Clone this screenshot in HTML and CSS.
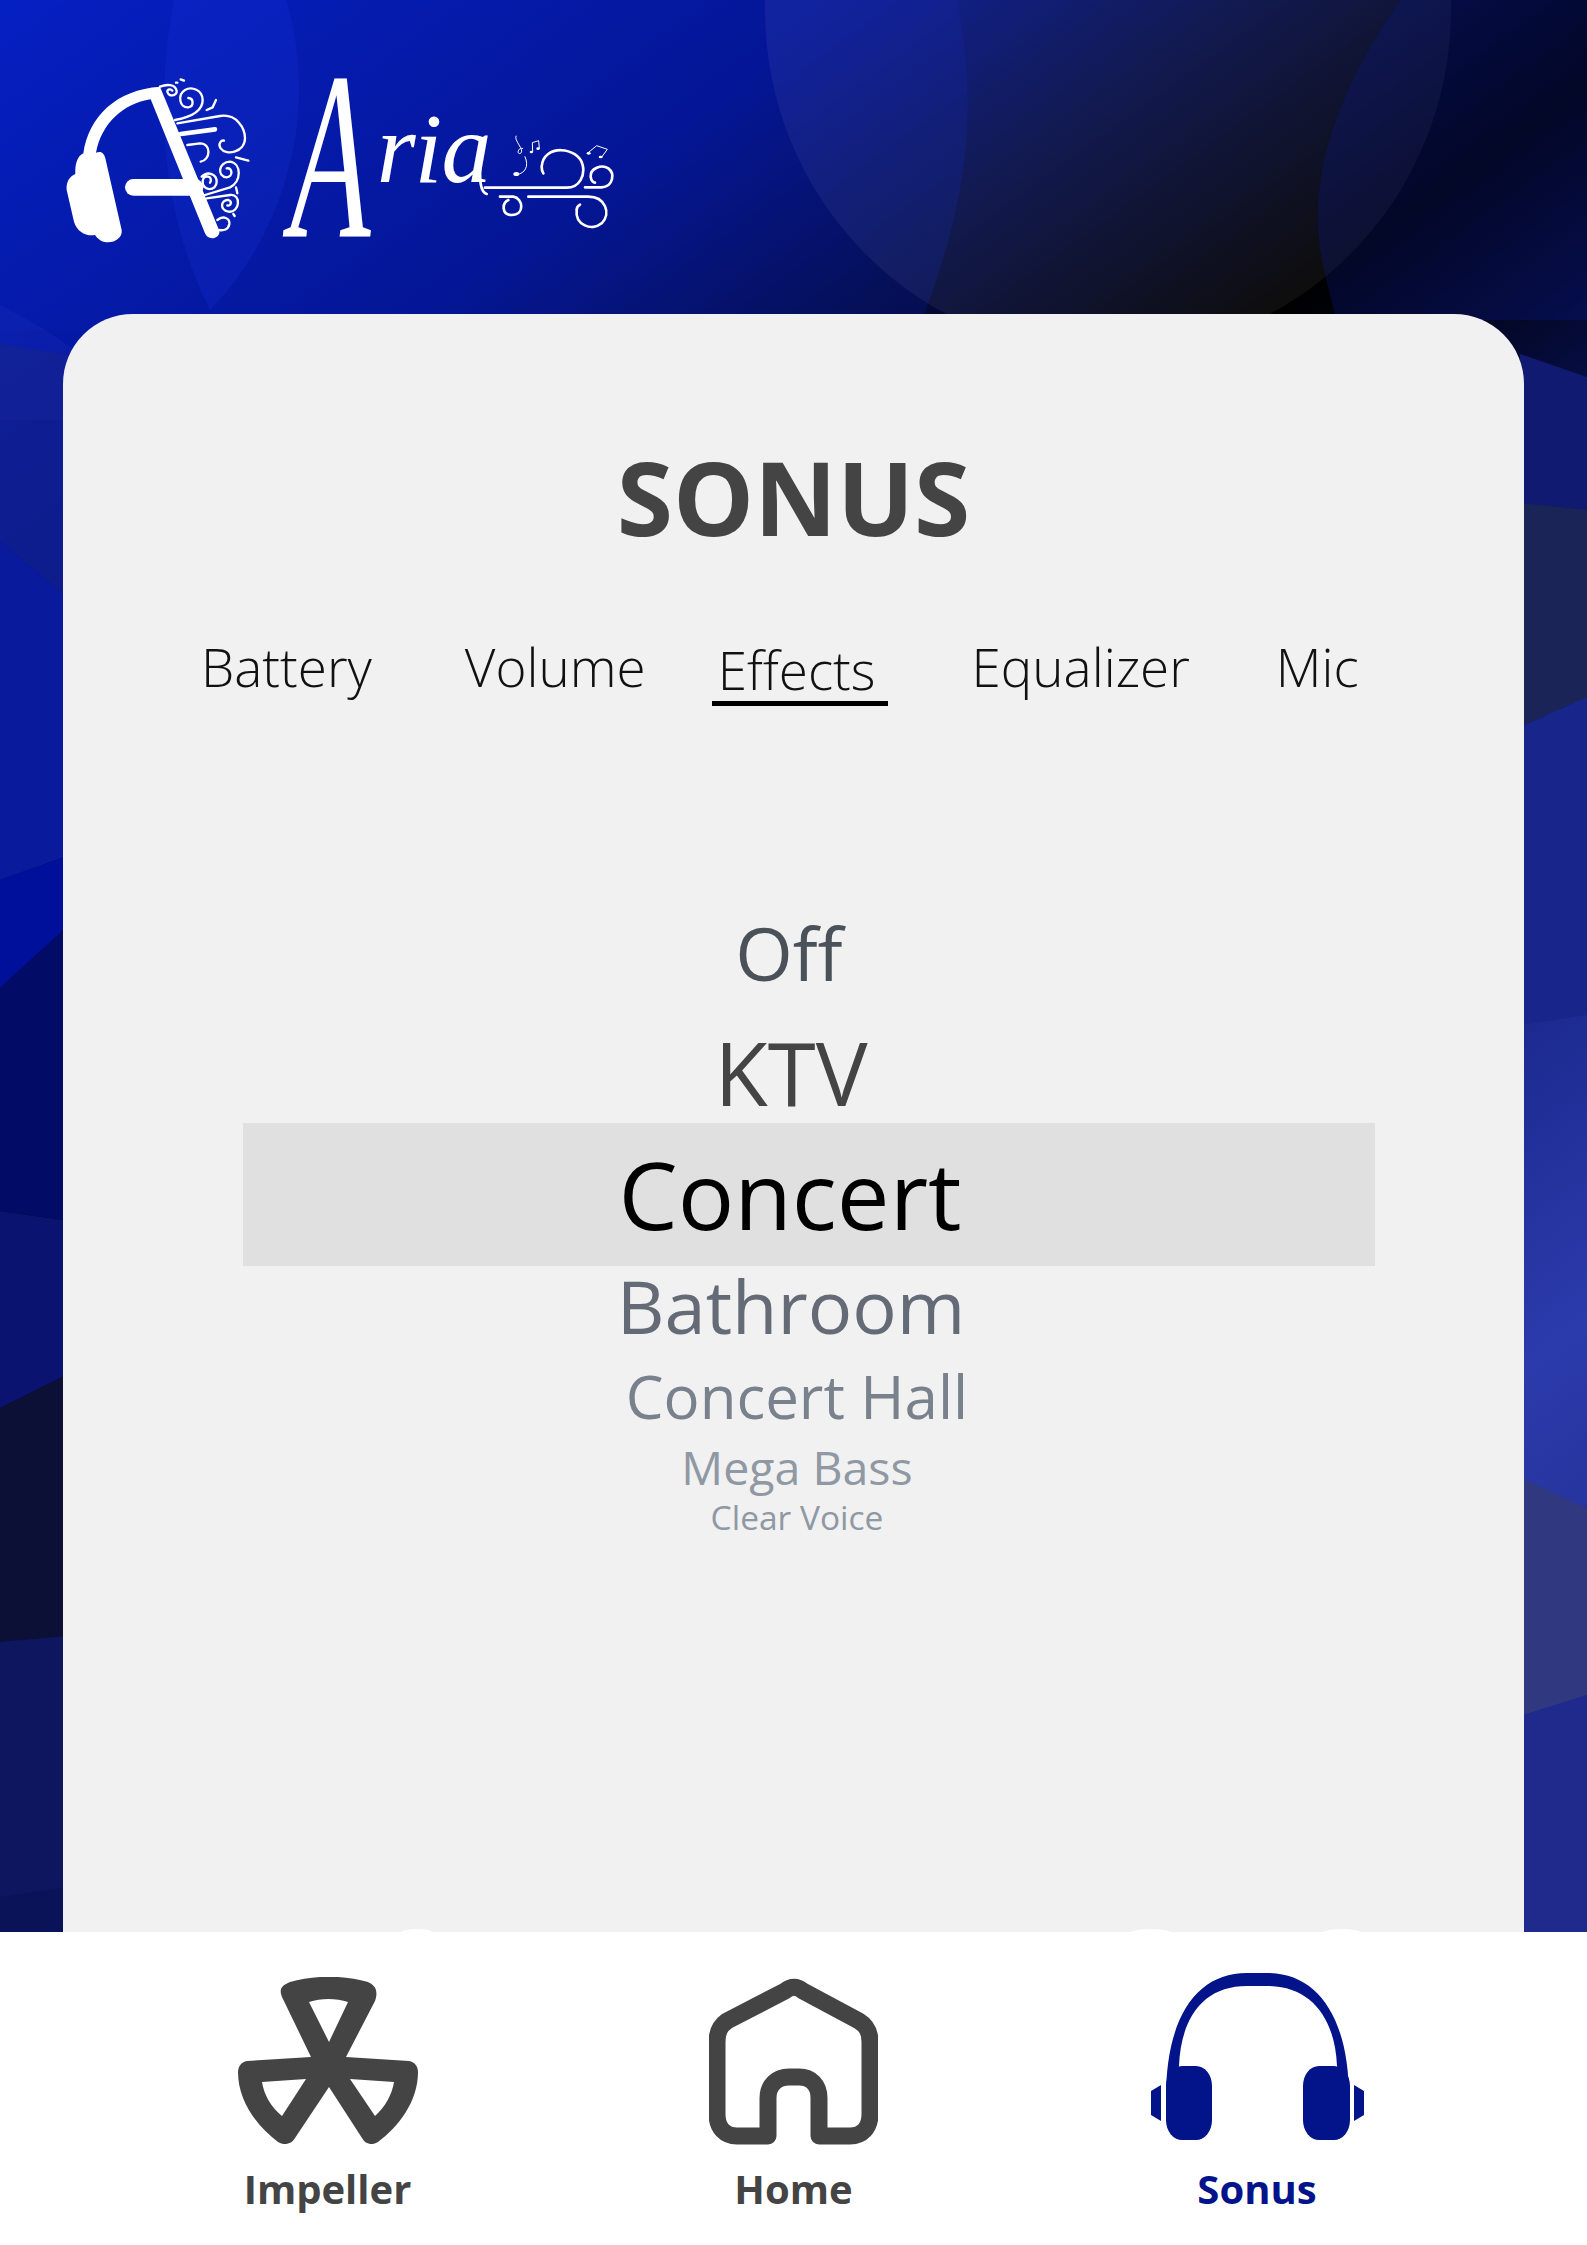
FILE: index.html
```html
<!doctype html>
<html lang="en">
    <head>
        <meta charset="utf-8">
        <title>Aria - Sonus</title>
        <link rel="stylesheet" href="styles.css">
    </head>
    <body>
        <div class="screen">
            <!-- background: gradient and the big see-through bubbles -->
            <svg class="backdrop" width="1587" height="1940" viewBox="0 0 1587 1940" aria-hidden="true">
                <defs>
                    <linearGradient id="sky" gradientUnits="userSpaceOnUse" x1="0" y1="0" x2="1467" y2="2025">
                        <stop offset="0" stop-color="#0520c8"/>
                        <stop offset="0.2" stop-color="#03148f"/>
                        <stop offset="0.29" stop-color="#050d48"/>
                        <stop offset="0.4" stop-color="#000000"/>
                        <stop offset="0.56" stop-color="#0a1670"/>
                        <stop offset="0.8" stop-color="#2b3bab"/>
                        <stop offset="1" stop-color="#1a2480"/>
                    </linearGradient>
                </defs>
                <rect width="1587" height="1940" fill="url(#sky)"/>
                <!-- blue wash, left of the dark middle -->
                <path d="M0 0H957C975 90 975 190 918 330H0Z" fill="#0a20b0" opacity=".22"/>
                <path d="M174 0C155 100 160 210 210 310C270 250 325 130 286 0Z" fill="#1a38e0" opacity=".22"/>
                <path d="M0 305C60 335 110 370 135 420H0Z" fill="#2a3ac0" opacity=".18"/>
                <ellipse cx="1108" cy="10" rx="343" ry="345" fill="#ffffff" opacity=".055"/>
                <path d="M1401 0C1350 70 1310 160 1319 240C1322 270 1330 290 1336 320H1587V0Z" fill="#0a1a90" opacity=".28"/>
                <!-- left strip -->
                <path d="M0 344L70 355V600L0 541Z" fill="#16238a" opacity=".6"/>
                <path d="M0 541L70 600V855L0 880Z" fill="#0a1a9c"/>
                <path d="M0 880L70 855V924L0 988Z" fill="#00109a"/>
                <path d="M0 988L70 924V1221L0 1211Z" fill="#020c66"/>
                <path d="M0 1211L70 1221V1373L0 1408Z" fill="#0a1470"/>
                <path d="M0 1408L70 1373V1636L0 1642Z" fill="#0c1036"/>
                <path d="M0 1642L70 1636V1886L0 1897Z" fill="#0e1660"/>
                <path d="M0 1897L70 1886V1940H0Z" fill="#0a1258"/>
                <!-- right strip -->
                <path d="M1520 354L1587 377V530L1520 503Z" fill="#0f1a70"/>
                <path d="M1520 503L1587 510V697L1520 727Z" fill="#1b2456"/>
                <path d="M1520 727L1587 697V1015L1520 1025Z" fill="#18268c"/>
                <path d="M1520 1477L1587 1509V1695L1520 1716Z" fill="#30397f"/>
                <path d="M1520 1716L1587 1695V1940H1520Z" fill="#1f2a8c"/>
            </svg>

            <header class="top">
                <svg class="mark" width="210" height="200" viewBox="0 0 630 600" aria-hidden="true">
                    <path class="mark-fill" d="M70 280C85 170 170 88 300 80L478 512C482 535 445 545 435 520L272 118C190 130 125 190 108 278C125 272 132 280 136 295L185 510C190 545 130 565 105 525C80 530 50 515 42 485L20 390C18 365 30 348 46 342C45 315 50 290 70 280Z"/>
                    <path class="mark-bar" d="M220 382H405"/>
                    <g class="mark-line">
                        <path d="M300 80C320 72 345 72 350 92C352 108 325 112 322 95C322 88 332 85 337 92"/>
                        <path d="M345 180C400 170 428 150 428 120C428 90 395 78 375 90C352 104 358 145 385 142C402 140 402 115 385 114"/>
                        <path d="M352 190L480 168C530 160 555 205 555 235C555 275 500 290 482 265C472 250 485 240 492 242"/>
                        <path class="mark-thick" d="M362 222L465 208"/>
                        <path d="M382 255L420 250C455 250 452 300 422 305"/>
                        <path d="M425 350C445 330 470 345 470 365C470 395 425 395 428 362C432 340 462 350 450 368"/>
                        <path d="M435 405L510 382C545 365 545 310 510 305C475 305 470 350 500 352C520 350 518 322 500 325"/>
                        <path d="M440 415L510 405C545 400 540 460 505 455C478 450 482 418 505 420C518 424 512 440 502 436"/>
                        <path d="M472 480C490 465 510 475 508 492C505 510 490 512 478 510"/>
                        <path d="M440 150L458 142M458 142L468 120"/>
                        <path d="M348 68L352 68M362 58L372 62M528 292L565 302M528 382L532 400M520 462L524 468"/>
                    </g>
                </svg>
                <div class="wordmark">
                    <svg class="swash" width="350" height="200" viewBox="0 0 1050 600" aria-hidden="true">
                        <path d="M600 320C600 360 600 395 620 402M615 383H860C900 383 915 345 908 315C895 260 790 250 785 320C785 330 787 335 790 340"/>
                        <path d="M915 382H965C1000 380 1005 340 985 325C965 312 930 325 932 350C933 362 940 368 945 368"/>
                        <path d="M660 410H700C730 415 735 465 695 465C665 465 665 430 685 420"/>
                        <path d="M745 410H925C975 410 995 460 965 490C935 515 885 495 890 450C890 445 893 438 900 434"/>
                        <path class="thin" d="M708 228C700 240 735 270 722 280C710 285 712 262 728 265M735 290C748 320 735 340 710 344"/>
                        <path class="thin" d="M758 275L757 248L776 242L778 265M922 280L950 257L982 268L966 290"/>
                        <ellipse cx="709" cy="342" rx="9" ry="6"/>
                        <ellipse cx="754" cy="276" rx="5" ry="4"/>
                        <ellipse cx="774" cy="266" rx="5" ry="4"/>
                        <ellipse cx="926" cy="280" rx="6" ry="4"/>
                        <ellipse cx="962" cy="291" rx="6" ry="4"/>
                    </svg>
                    <span class="word"><span class="word-cap">A</span>ria</span>
                </div>
            </header>

            <main class="card">
                <h1 class="title">SONUS</h1>
                <nav class="tabs">
                    <span class="tab tab-battery">Battery</span>
                    <span class="tab">Volume</span>
                    <span class="tab tab-on">Effects</span>
                    <span class="tab tab-eq">Equalizer</span>
                    <span class="tab">Mic</span>
                </nav>
                <ul class="wheel">
                    <li class="opt opt-off">Off</li>
                    <li class="opt opt-ktv">KTV</li>
                    <li class="opt opt-picked">Concert</li>
                    <li class="opt opt-bath">Bathroom</li>
                    <li class="opt opt-hall">Concert Hall</li>
                    <li class="opt opt-bass">Mega Bass</li>
                    <li class="opt opt-voice">Clear Voice</li>
                </ul>
            </main>

            <footer class="bar">
                <span class="bump bump-1"></span>
                <span class="bump bump-2"></span>
                <span class="bump bump-3"></span>
                <a class="nav nav-impeller">
                    <svg width="180" height="167" viewBox="0 0 180 167" aria-hidden="true">
                        <path class="fan" fill-rule="evenodd" d="M44 20C40 10 46 8 52 5C75 -2 107 -2 130 5C136 8 141 12 137 24L108 80L171 84C177 85 180 90 180 95C180 125 160 150 140 165C134 169 127 167 124 161L91 110L57 161C54 167 46 169 40 165C20 150 0 125 0 95C0 90 3 85 9 84L73 80ZM71 25L91 65L110 25C98 21 83 21 71 25ZM112 102L137 139C147 130 154 118 156 105ZM68 102L24 105C26 118 33 130 44 139Z"/>
                    </svg>
                    <span class="nav-label">Impeller</span>
                </a>
                <a class="nav nav-home">
                    <svg width="169" height="167" viewBox="0 0 169 167" aria-hidden="true">
                        <path class="house" d="M59 158H28C16 158 8 150 8 136V64C8 54 11 48 18 43L76 13C82 8 88 8 94 13L150 43C158 48 161 54 161 64V136C161 150 153 158 141 158H110V120C110 107 102 99 90 99H80C68 99 59 107 59 120Z"/>
                    </svg>
                    <span class="nav-label">Home</span>
                </a>
                <a class="nav nav-sonus">
                    <svg width="213" height="168" viewBox="0 0 213 168" aria-hidden="true">
                        <path d="M15 125C15 45 45 0 96 0H116C167 0 198 45 198 125L186 93C184 45 160 13 116 13H96C52 13 30 45 28 93Z"/>
                        <rect x="15" y="93" width="46" height="74" rx="16" ry="20"/>
                        <rect x="152" y="93" width="47" height="74" rx="16" ry="20"/>
                        <path d="M0 118L10 112V148L0 142ZM213 118L203 112V148L213 142Z"/>
                    </svg>
                    <span class="nav-label">Sonus</span>
                </a>
            </footer>
        </div>
    </body>
</html>
```

FILE: styles.css
```css
body {
    margin: 0;
    font-family: "Open Sans", sans-serif;
}
ul {
    list-style: none;
    margin: 0;
    padding: 0;
}
.screen {
    position: relative;
    display: flex;
    flex-direction: column;
    width: 1587px;
    height: 2245px;
    overflow: hidden;
}
.backdrop {
    position: absolute;
    top: 0;
    left: 0;
}

/* logo */
.top {
    position: relative;
    display: flex;
    gap: 10px;
    height: 254px;
    padding: 60px 0 0 60px;
}
.mark-fill {
    fill: #fff;
}
.mark-bar {
    fill: none;
    stroke: #fff;
    stroke-width: 50;
    stroke-linecap: round;
}
.mark-line path {
    fill: none;
    stroke: #fff;
    stroke-width: 7;
    stroke-linecap: round;
}
.mark-line .mark-thick {
    stroke-width: 14;
}
.wordmark {
    position: relative;
    width: 350px;
    height: 200px;
}
.swash path {
    fill: none;
    stroke: #fff;
    stroke-width: 8;
    stroke-linecap: round;
}
.swash .thin {
    stroke-width: 3;
}
.swash ellipse {
    fill: #fff;
}
.word {
    position: absolute;
    left: 3px;
    top: 70px;
    font-family: "Liberation Serif", serif;
    font-style: italic;
    font-size: 100px;
    line-height: 0;
    letter-spacing: -1px;
    color: #fff;
}
.word-cap {
    display: inline-block;
    font-size: 155px;
    transform: translateY(26px) scale(.85, 1.55);
}

/* card */
.card {
    position: relative;
    flex: 1;
    margin: 0 63px;
    background: #f1f1f1;
    border-radius: 70px 70px 0 0;
}
.title {
    margin: 0;
    padding-top: 113px;
    font-size: 102px;
    font-weight: 700;
    line-height: 139px;
    text-align: center;
    color: #444;
}
.tabs {
    display: flex;
    gap: 91px;
    margin-top: 63px;
    padding-left: 138px;
    font-weight: 300;
    font-size: 53px;
    line-height: 75px;
    color: #111;
}
.tab-battery {
    margin-right: 2px;
}
.tab-on {
    margin: 3px -7px 0 -25px;
    height: 69px;
    padding: 0 12px 0 6px;
    border-bottom: 5px solid #000;
}
.tab-eq {
    margin-right: -5px;
}
.wheel {
    margin: 178px 0 0 180px;
    width: 1132px;
    text-align: center;
}
.opt {
    padding-right: 32px;
}
.opt-off {
    padding-right: 40px;
    font-size: 74px;
    line-height: 138px;
    color: #4b5159;
}
.opt-ktv {
    padding-right: 36px;
    font-size: 87px;
    line-height: 101px;
    color: #444;
}
.opt-picked {
    padding-right: 38px;
    background: #e0e0e0;
    font-size: 94px;
    line-height: 143px;
    color: #000;
}
.opt-bath {
    padding-right: 36px;
    font-size: 74px;
    line-height: 79px;
    color: #646b76;
}
.opt-hall {
    padding-right: 24px;
    font-size: 60px;
    line-height: 102px;
    color: #78818c;
}
.opt-bass {
    padding-right: 24px;
    font-size: 46.5px;
    line-height: 40px;
    color: #8f98a3;
}
.opt-voice {
    padding-right: 24px;
    font-size: 33.5px;
    line-height: 60px;
    color: #8f98a3;
}

/* bottom nav */
.bar {
    position: relative;
    display: grid;
    grid-template-columns: repeat(3, 465px);
    justify-content: center;
    height: 313px;
    background: #fff;
}
.bump {
    position: absolute;
    top: -3px;
    height: 6px;
    border-radius: 50%;
    background: #fff;
}
.bump-1 {
    left: 402px;
    width: 30px;
}
.bump-2 {
    left: 1132px;
    width: 38px;
}
.bump-3 {
    left: 1324px;
    width: 36px;
}
.nav {
    display: flex;
    flex-direction: column;
    align-items: center;
    font-size: 40px;
    font-weight: 700;
    color: #444;
}
.nav svg {
    display: block;
}
.nav-impeller {
    padding-right: 2px;
}
.nav-impeller svg {
    margin: 45px 0 18px;
}
.nav-home svg {
    margin: 46px 0 17px;
}
.nav-sonus {
    padding-right: 3px;
}
.nav-sonus svg {
    margin: 41px 0 21px;
    fill: #03138a;
}
.nav-label {
    line-height: 54px;
}
.nav-sonus .nav-label {
    color: #03138a;
}
.fan {
    fill: #444;
}
.house {
    fill: none;
    stroke: #444;
    stroke-width: 17;
    stroke-linejoin: round;
}
```
